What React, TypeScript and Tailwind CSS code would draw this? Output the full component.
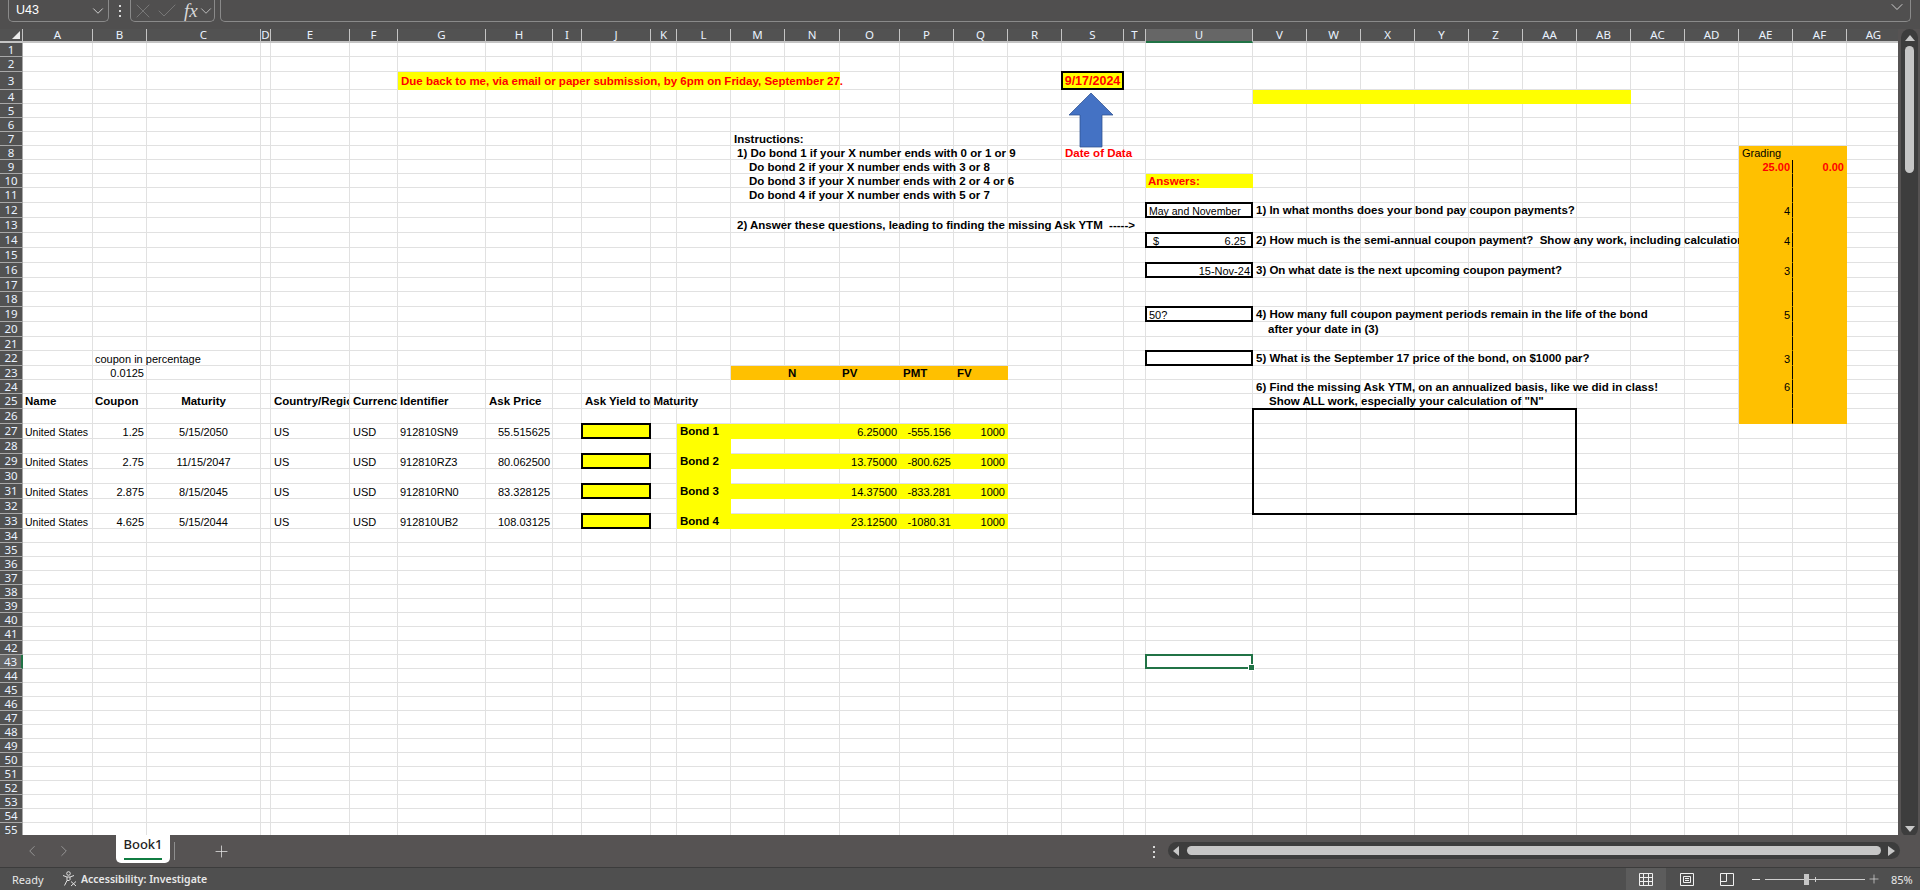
import { ChevronDown, ChevronLeft, ChevronRight, Check, Plus, X } from 'lucide-react';

const colNames = ['A','B','C','D','E','F','G','H','I','J','K','L','M','N','O','P','Q','R','S','T','U','V','W','X','Y','Z','AA','AB','AC','AD','AE','AF','AG'];
const colWidths = [70,54,114,10,79,48,88,67,29,69,26,54,54,55,60,54,54,54,62,22,107,54,54,54,54,54,54,54,54,54,54,54,54];
const rowHeights = [14,15,18,14,14,14,14,14,14,14,15,15,15,15,15,15,14,15,15,15,14,15,14,14,15,15,15,15,15,15,15,15,15];
const getRowHeight = (r: number) => rowHeights[r - 1] ?? 14;
const rows = Array.from({ length: 55 }, (_, i) => i + 1);

type Cell = { t?: string; cn?: string; clipTo?: number; pre?: string };

const bold = 'font-bold text-[11.5px]';
const redBold = 'font-bold text-[#ff0000]';
const red = `${redBold} text-[11.5px]`;
const right = 'justify-end pr-[2px]';

const cells: Record<string, Cell> = {
  G3: { t: 'Due back to me, via email or paper submission, by 6pm on Friday, September 27.', cn: `${red} pl-[3px]` },
  S3: { t: '9/17/2024', cn: `${redBold} justify-center text-[12.5px]` },
  M7: { t: 'Instructions:', cn: `${bold} pl-[3px]` },
  M8: { t: '1) Do bond 1 if your X number ends with 0 or 1 or 9', cn: `${bold} pl-[6px]` },
  M9: { t: 'Do bond 2 if your X number ends with 3 or 8', cn: `${bold} pl-[18px]` },
  M10: { t: 'Do bond 3 if your X number ends with 2 or 4 or 6', cn: `${bold} pl-[18px]` },
  M11: { t: 'Do bond 4 if your X number ends with 5 or 7', cn: `${bold} pl-[18px]` },
  M13: { t: '2) Answer these questions, leading to finding the missing Ask YTM  ----->', cn: `${bold} pl-[6px]` },
  S8: { t: 'Date of Data', cn: `${red} pl-[3px]` },
  U10: { t: 'Answers:', cn: `${red} pl-[2px]` },
  U12: { t: 'May and November', cn: 'pl-[3px] text-[10.5px]' },
  U14: { t: '6.25', pre: '$', cn: 'justify-end pr-[6px] pl-[7px]' },
  U16: { t: '15-Nov-24', cn: right },
  U19: { t: '50?', cn: 'pl-[3px]' },
  V12: { t: '1) In what months does your bond pay coupon payments?', cn: `${bold} pl-[3px]` },
  V14: { t: '2) How much is the semi-annual coupon payment?  Show any work, including calculations', cn: `${bold} pl-[3px]`, clipTo: 486 },
  V16: { t: '3) On what date is the next upcoming coupon payment?', cn: `${bold} pl-[3px]` },
  V19: { t: '4) How many full coupon payment periods remain in the life of the bond', cn: `${bold} pl-[3px]` },
  V20: { t: 'after your date in (3)', cn: `${bold} pl-[15px]` },
  V22: { t: '5) What is the September 17 price of the bond, on $1000 par?', cn: `${bold} pl-[3px]` },
  V24: { t: '6) Find the missing Ask YTM, on an annualized basis, like we did in class!', cn: `${bold} pl-[3px]` },
  V25: { t: 'Show ALL work, especially your calculation of "N"', cn: `${bold} pl-[16px]` },
  AE8: { t: 'Grading', cn: 'pl-[3px]' },
  AE9: { t: '25.00', cn: `${redBold} ${right}` },
  AF9: { t: '0.00', cn: `${redBold} ${right}` },
  AE12: { t: '4', cn: right },
  AE14: { t: '4', cn: right },
  AE16: { t: '3', cn: right },
  AE19: { t: '5', cn: right },
  AE22: { t: '3', cn: right },
  AE24: { t: '6', cn: right },
  B22: { t: 'coupon in percentage', cn: 'pl-[2px]' },
  B23: { t: '0.0125', cn: right },
  N23: { t: 'N', cn: `${bold} pl-[3px]` },
  O23: { t: 'PV', cn: `${bold} pl-[2px]` },
  P23: { t: 'PMT', cn: `${bold} pl-[3px]` },
  Q23: { t: 'FV', cn: `${bold} pl-[3px]` },
  A25: { t: 'Name', cn: `${bold} pl-[2px]` },
  B25: { t: 'Coupon', cn: `${bold} pl-[2px]` },
  C25: { t: 'Maturity', cn: `${bold} justify-center` },
  E25: { t: 'Country/Region', cn: `${bold} pl-[3px] overflow-hidden` },
  F25: { t: 'Currency', cn: `${bold} pl-[3px] overflow-hidden` },
  G25: { t: 'Identifier', cn: `${bold} pl-[2px]` },
  H25: { t: 'Ask Price', cn: `${bold} pl-[3px]` },
  J25: { t: 'Ask Yield to Maturity', cn: `${bold} pl-[3px]` },
};

const bonds = [
  { row: 27, coupon: '1.25', maturity: '5/15/2050', id: '912810SN9', price: '55.515625', bond: 'Bond 1', pmt: '6.25000', pv: '-555.156' },
  { row: 29, coupon: '2.75', maturity: '11/15/2047', id: '912810RZ3', price: '80.062500', bond: 'Bond 2', pmt: '13.75000', pv: '-800.625' },
  { row: 31, coupon: '2.875', maturity: '8/15/2045', id: '912810RN0', price: '83.328125', bond: 'Bond 3', pmt: '14.37500', pv: '-833.281' },
  { row: 33, coupon: '4.625', maturity: '5/15/2044', id: '912810UB2', price: '108.03125', bond: 'Bond 4', pmt: '23.12500', pv: '-1080.31' },
];

bonds.forEach((b) => {
  cells[`A${b.row}`] = { t: 'United States', cn: 'pl-[2px] text-[10.5px]' };
  cells[`B${b.row}`] = { t: b.coupon, cn: right };
  cells[`C${b.row}`] = { t: b.maturity, cn: 'justify-center' };
  cells[`E${b.row}`] = { t: 'US', cn: 'pl-[3px]' };
  cells[`F${b.row}`] = { t: 'USD', cn: 'pl-[3px]' };
  cells[`G${b.row}`] = { t: b.id, cn: 'pl-[2px]' };
  cells[`H${b.row}`] = { t: b.price, cn: right };
  cells[`L${b.row}`] = { t: b.bond, cn: `${bold} pl-[3px]` };
  cells[`O${b.row}`] = { t: b.pmt, cn: right };
  cells[`P${b.row}`] = { t: b.pv, cn: right };
  cells[`Q${b.row}`] = { t: '1000', cn: right };
});

const boxed = new Set(['S3', 'U12', 'U14', 'U16', 'U19', 'U22', 'J27', 'J29', 'J31', 'J33']);
const overlays = new Set(['V26', 'U43', 'S4']);

const inRange = (c: number, r: number, c1: string, c2: string, r1: number, r2: number) =>
  c >= colNames.indexOf(c1) && c <= colNames.indexOf(c2) && r >= r1 && r <= r2;

const getFill = (c: number, r: number) => {
  if (inRange(c, r, 'G', 'N', 3, 3) || inRange(c, r, 'S', 'S', 3, 3)) return 'bg-[#ffff00] border-transparent';
  if (inRange(c, r, 'V', 'AB', 4, 4) || inRange(c, r, 'U', 'U', 10, 10)) return 'bg-[#ffff00] border-transparent';
  if (inRange(c, r, 'L', 'L', 27, 33)) return 'bg-[#ffff00] border-transparent';
  if ([27, 29, 31, 33].includes(r) && (inRange(c, r, 'L', 'Q', r, r) || colNames[c] === 'J')) return 'bg-[#ffff00] border-transparent';
  if (inRange(c, r, 'M', 'Q', 23, 23)) return 'bg-[#ffc000] border-transparent';
  if (inRange(c, r, 'AE', 'AE', 9, 26)) return 'bg-[#ffc000] border-b-transparent border-r-black';
  if (inRange(c, r, 'AE', 'AF', 8, 26)) return 'bg-[#ffc000] border-transparent';
  return 'border-[#e1e1e1]';
};

function SheetCell({ c, r }: { c: number; r: number }) {
  const key = `${colNames[c]}${r}`;
  const cell = cells[key];
  // flex items paint as a unit, so a cell whose text runs over its neighbours has to sit above them
  const layer = overlays.has(key) ? 'relative z-[2]' : cell || boxed.has(key) ? 'relative z-[1]' : '';
  return (
    <div
      className={`flex shrink-0 items-center whitespace-pre border-r border-b pt-[2px] ${layer} ${getFill(c, r)} ${cell?.cn ?? ''}`}
      style={{ width: colWidths[c] }}
    >
      {cell?.pre && <span className="mr-auto">{cell.pre}</span>}
      {cell?.clipTo ? (
        <span className="block shrink-0 overflow-hidden" style={{ width: cell.clipTo - 3 }}>{cell.t}</span>
      ) : (
        cell?.t
      )}
      {boxed.has(key) && <div className="absolute -inset-px border-2 border-black" />}
      {key === 'V26' && <div className="absolute -left-px -top-px h-[107px] w-[325px] border-2 border-black" />}
      {key === 'U43' && (
        <div className="absolute -inset-px border-2 border-[#217346]">
          <div className="absolute -bottom-[4px] -right-[4px] h-[7px] w-[7px] border border-white bg-[#217346]" />
        </div>
      )}
      {key === 'S4' && (
        <svg className="absolute left-[5px] top-[2px]" width="48" height="56" viewBox="0 0 48 56">
          <path d="M24 1 L46 23 H35 V55 H13 V23 H2 Z" fill="#4472c4" stroke="#2f528f" strokeWidth="0.75" />
        </svg>
      )}
    </div>
  );
}

function FormulaBar() {
  return (
    <div className="flex h-[29px] shrink-0 items-start bg-[#504f4f] pl-[8px] pr-[9px] text-white">
      <div className="flex h-[22px] w-[101px] items-center justify-between rounded-b-[5px] border border-t-0 border-[#8a8a8a] pl-[7px] pr-px text-[12.5px]">
        <span>U43</span>
        <ChevronDown size={18} strokeWidth={1.1} className="text-[#e8e8e8]" />
      </div>
      <svg className="ml-[9px] mt-[4px]" width="4" height="14" viewBox="0 0 4 14" fill="#d8d8d8">
        <rect x="1" y="1" width="2" height="2" />
        <rect x="1" y="6" width="2" height="2" />
        <rect x="1" y="11" width="2" height="2" />
      </svg>
      <div className="ml-[8px] flex h-[22px] w-[85px] items-center rounded-b-[5px] border border-t-0 border-[#8a8a8a] text-[#7c7c7c]">
        <X size={24} strokeWidth={0.9} className="shrink-0" />
        <Check size={24} strokeWidth={0.9} className="shrink-0" />
        <span className="ml-[5px] font-['Liberation_Serif',serif] text-[19px] italic leading-none text-[#d8d8d8]">fx</span>
        <ChevronDown size={18} strokeWidth={1.1} className="-ml-[1px] shrink-0 text-[#d0d0d0]" />
      </div>
      <div className="ml-[5px] flex h-[22px] flex-1 items-start justify-end rounded-b-[5px] border border-t-0 border-[#8a8a8a] pr-[3px]">
        <ChevronDown size={20} strokeWidth={1.1} className="-mt-[3px] text-[#d8d8d8]" />
      </div>
    </div>
  );
}

function HeaderRow() {
  return (
    <div className="flex h-[14px] shrink-0 bg-[#525252] font-['Noto_Sans',sans-serif] text-[11.5px] text-[#eaf2ff]">
      <div className="relative flex w-[23px] shrink-0 items-end justify-end border-r border-b-2 border-[#c4c4c4] pb-[2px] pr-[2px]">
        <div className="h-0 w-0 border-b-[8px] border-l-[8px] border-b-[#ececec] border-l-transparent" />
      </div>
      {colNames.map((name, c) => (
        <div
          key={name}
          className={`flex shrink-0 items-center justify-center border-r border-[#c4c4c4] ${name === 'U' ? 'border-b-2 border-b-[#217346] bg-[#666666]' : 'border-b-2'}`}
          style={{ width: colWidths[c] }}
        >
          {name}
        </div>
      ))}
    </div>
  );
}

function Grid() {
  return (
    <div className="flex w-[1898px] flex-col overflow-hidden bg-white">
      <HeaderRow />
      {rows.map((r) => (
        <div key={r} className="flex shrink-0" style={{ height: getRowHeight(r) }}>
          <div className={`flex w-[23px] shrink-0 items-center justify-center border-r border-b border-[#a8a8a8] font-['Noto_Sans',sans-serif] text-[11.5px] text-[#eaf2ff] ${r === 43 ? 'border-r-2 border-r-[#217346] bg-[#666666]' : 'bg-[#525252]'}`}>
            {r}
          </div>
          {colNames.map((name, c) => (
            <SheetCell key={name} c={c} r={r} />
          ))}
        </div>
      ))}
    </div>
  );
}

function VerticalScrollbar() {
  return (
    <div className="flex h-[808px] w-[22px] flex-col items-center pl-[3px] pr-[2px]">
      <div className="flex h-full w-[17px] flex-col items-center rounded-full bg-[#3d3d3d]">
        <div className="mt-[6px] h-0 w-0 border-x-[5px] border-b-[6px] border-x-transparent border-b-[#c8c8c8]" />
        <div className="mt-[5px] h-[127px] w-[9px] rounded-full bg-[#c6c6c6]" />
        <div className="mb-[5px] mt-auto h-0 w-0 border-x-[5px] border-t-[6px] border-x-transparent border-t-[#c8c8c8]" />
      </div>
    </div>
  );
}

function TabBar() {
  return (
    <div className="flex h-[32px] shrink-0 items-start bg-[#565353] text-white">
      <ChevronLeft size={18} strokeWidth={1} className="ml-[23px] mt-[7px] text-[#a8a8a8]" />
      <ChevronRight size={18} strokeWidth={1} className="ml-[14px] mt-[7px] text-[#a8a8a8]" />
      <div className="relative ml-[43px] flex h-[28px] w-[54px] justify-center rounded-b-[5px] bg-white pt-[3px] font-['Noto_Sans',sans-serif] text-[13px] font-medium text-[#222222]">
        Book1
        <div className="absolute bottom-[3px] left-[8px] h-[2px] w-[38px] bg-[#107c41]" />
      </div>
      <div className="ml-[4px] mt-[7px] h-[18px] w-px bg-[#8e8e8e]" />
      <Plus size={19} strokeWidth={1} className="ml-[37px] mt-[7px] text-[#e0e0e0]" />
      <svg className="ml-[921px] mt-[11px]" width="4" height="12" viewBox="0 0 4 12" fill="#d8d8d8">
        <rect x="1" y="0" width="2" height="2" />
        <rect x="1" y="5" width="2" height="2" />
        <rect x="1" y="10" width="2" height="2" />
      </svg>
      <div className="ml-[12px] mt-[7px] flex h-[17px] w-[732px] items-center rounded-full bg-[#3d3d3d] px-[5px]">
        <div className="h-0 w-0 border-y-[5px] border-r-[6px] border-y-transparent border-r-[#c8c8c8]" />
        <div className="ml-[8px] h-[9px] flex-1 rounded-full bg-[#c6c6c6]" />
        <div className="ml-[7px] h-0 w-0 border-y-[5px] border-l-[7px] border-y-transparent border-l-[#c8c8c8]" />
      </div>
    </div>
  );
}

function StatusBar() {
  return (
    <div className="flex h-[23px] shrink-0 items-center border-t border-[#3c3c3c] bg-[#4f4f4f] font-['Noto_Sans',sans-serif] text-[11px] text-[#e8e8e8]">
      <span className="ml-[12px] w-[34px]">Ready</span>
      <svg className="ml-[16px]" width="15" height="16" viewBox="0 0 15 16" fill="none" stroke="#e0e0e0" strokeWidth="1">
        <circle cx="6.5" cy="2.5" r="1.8" />
        <path d="M1 4.5 L5 6 H8 L12 4.5 M5 6 V9.5 L2.5 14.5 M8 6 V9 M5 9.5 H7.5" />
        <path d="M9 10.5 L14 15 M14 10.5 L9 15" />
      </svg>
      <span className="ml-[4px] text-[10.5px] font-semibold">Accessibility: Investigate</span>
      <div className="ml-auto flex h-full items-center">
        <div className="flex h-full w-[40px] items-center justify-center bg-[#5c5c5c]">
          <svg width="14" height="13" viewBox="0 0 14 13" fill="none" stroke="#f0f0f0" strokeWidth="1">
            <path d="M.5.5h13v12H.5z M.5 4.5h13 M.5 8.5h13 M4.5.5v12 M9.5.5v12" />
          </svg>
        </div>
        <div className="flex w-[41px] justify-center">
          <svg width="14" height="13" viewBox="0 0 14 13" fill="none" stroke="#f0f0f0" strokeWidth="1">
            <path d="M.5.5h13v12H.5z M3.5 3.5h7v6h-7z M5 5.5h4 M5 7.5h4" />
          </svg>
        </div>
        <div className="flex w-[40px] justify-center">
          <svg width="14" height="13" viewBox="0 0 14 13" fill="none" stroke="#f0f0f0" strokeWidth="1">
            <path d="M.5.5h13v12H.5z M.5 8.5h6V.5" />
          </svg>
        </div>
        <div className="ml-[5px] h-px w-[8px] bg-[#e8e8e8]" />
        <div className="relative ml-[5px] h-px w-[100px] bg-[#cfcfcf]">
          <div className="absolute -top-[5px] left-[39px] h-[11px] w-[5px] bg-[#c6c6c6]" />
          <div className="absolute -top-[2px] left-[50px] h-[5px] w-px bg-[#cfcfcf]" />
        </div>
        <Plus size={14} strokeWidth={1.1} className="ml-[2px] text-[#e8e8e8]" />
        <span className="ml-[10px] w-[29px]">85%</span>
      </div>
    </div>
  );
}

export default function App() {
  return (
    <div className="flex h-[890px] w-[1920px] flex-col overflow-hidden bg-[#565353] font-['Liberation_Sans',Arial,sans-serif] text-[11px] leading-none text-black">
      <FormulaBar />
      <div className="flex h-[806px] shrink-0">
        <Grid />
        <VerticalScrollbar />
      </div>
      <TabBar />
      <StatusBar />
    </div>
  );
}
